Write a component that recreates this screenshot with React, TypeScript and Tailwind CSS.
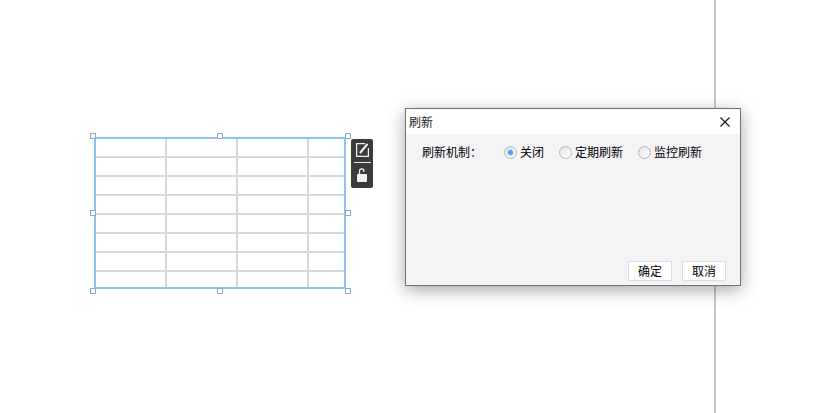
const font = { fontFamily: '"Noto Sans CJK SC", "Noto Sans", sans-serif' }

const rowHeights = ['h-[17px]', 'h-[17px]', 'h-[17px]', 'h-[17px]', 'h-[17px]', 'h-[17px]', 'h-[17px]', 'h-[15px]']
const cellWidths = ['w-[69px]', 'w-[69px]', 'w-[69px]', 'w-[35px]']

// position of the resize handles around the selected table
const handles = [
  'left-[-4px] top-[-4px]',
  'left-[123px] top-[-4px]',
  'left-[251px] top-[-4px]',
  'left-[-4px] top-[73px]',
  'left-[251px] top-[73px]',
  'left-[-4px] top-[151px]',
  'left-[123px] top-[151px]',
  'left-[251px] top-[151px]',
]

function TableWidget() {
  return (
    <div className="absolute left-[94px] top-[137px]">
      <div className="flex w-[252px] flex-col border-2 border-[#90c2f8] bg-white">
        {rowHeights.map((height, r) => (
          <div key={r} className={`flex ${r < 7 ? 'border-b-2 border-[#d8d8d8]' : ''}`}>
            {cellWidths.map((width, c) => (
              <div key={c} className={`${height} ${width} ${c < 3 ? 'box-content border-r-2 border-[#d8d8d8]' : ''}`} />
            ))}
          </div>
        ))}
      </div>
      {handles.map((pos) => (
        <span key={pos} className={`absolute h-[6px] w-[6px] border border-[#8fa9c6] bg-white ${pos}`} />
      ))}
    </div>
  )
}

function WidgetToolbar() {
  return (
    <div className="absolute left-[351px] top-[139px] flex h-[49px] w-[22px] flex-col items-center rounded-[2px] bg-[#3b3b3b]">
      <svg width="13" height="14" viewBox="0 0 13 14" fill="none" className="mt-[4px]" stroke="#f2f2f2">
        <path d="M9 0.6H0.6V13.4H12.4V5" strokeWidth="1.2" />
        <path d="M4 10L11.5 1" strokeWidth="2" />
      </svg>
      <div className="mt-[5px] h-px w-[17px] bg-[#e6e6e6]" />
      <svg width="10" height="14" viewBox="0 0 10 14" className="mt-[5px]" fill="none">
        <path d="M2.5 6V3a2.2 2.2 0 0 1 4.4 0v1" stroke="#f2f2f2" strokeWidth="1.2" />
        <rect x="0" y="6" width="10" height="8" rx="1" fill="#f2f2f2" />
      </svg>
    </div>
  )
}

function Radio({ label, checked }: { label: string; checked?: boolean }) {
  return (
    <label className="flex items-center">
      <span className="flex h-[13px] w-[13px] items-center justify-center rounded-full border border-[#b4b4b4] bg-gradient-to-br from-[#e4e4e4] to-[#ffffff]">
        {checked && <span className="h-[5px] w-[5px] rounded-full bg-[#4a9cf5] shadow-[0_0_2px_#7ab8f8]" />}
      </span>
      <span className="ml-[3px] text-[12px] leading-[16px] text-black">{label}</span>
    </label>
  )
}

function RefreshDialog() {
  return (
    <div
      className="absolute left-[405px] top-[108px] flex h-[178px] w-[336px] flex-col border border-[#707070] bg-[#f4f4f7] shadow-[0_4px_16px_rgba(0,0,0,0.35)]"
      style={font}
    >
      <div className="flex h-[25px] items-center justify-between bg-white pl-[3px] pr-[10px]">
        <span className="text-[12px] leading-[16px] text-[#222]">刷新</span>
        <svg width="10" height="10" viewBox="0 0 10 10" stroke="#111" strokeWidth="1.1">
          <path d="M0.5 0.5L9.5 9.5M9.5 0.5L0.5 9.5" />
        </svg>
      </div>
      <div className="flex flex-1 flex-col pb-[4px]">
        <div className="mt-[10px] flex items-center pl-[16px]">
          <span className="w-[82px] text-[12px] leading-[16px] text-black">刷新机制：</span>
          <div className="flex gap-[15px]">
            <Radio label="关闭" checked />
            <Radio label="定期刷新" />
            <Radio label="监控刷新" />
          </div>
        </div>
        <div className="mt-auto flex justify-end gap-[10px] pr-[14px]">
          <button className="h-[20px] w-[44px] border border-[#dcdcdc] bg-white text-[12px] leading-[16px] text-black">确定</button>
          <button className="h-[20px] w-[44px] border border-[#dcdcdc] bg-white text-[12px] leading-[16px] text-black">取消</button>
        </div>
      </div>
    </div>
  )
}

export default function App() {
  return (
    <div className="relative h-[413px] w-[840px] overflow-hidden bg-white">
      <div className="ml-[714px] h-full w-[2px] bg-[#c8c8c8]" />
      <TableWidget />
      <WidgetToolbar />
      <RefreshDialog />
    </div>
  )
}
